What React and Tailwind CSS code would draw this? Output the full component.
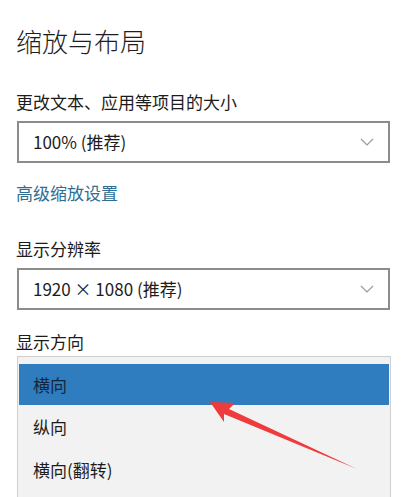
import React from "react";

const font = { fontFamily: '"Noto Sans CJK SC", "Noto Sans", sans-serif' };

function Chevron() {
  return (
    <svg width="14" height="8" viewBox="0 0 14 8" className="shrink-0">
      <path d="M1 1 L7 7 L13 1" fill="none" stroke="#9a9a9a" strokeWidth="1.2" />
    </svg>
  );
}

function Select({ value }) {
  return (
    <div className="ml-[17px] w-[373px] h-[42px] border-2 border-[#8c8c8c] bg-white flex items-center justify-between pl-[14px] pr-[14px]">
      <span className="text-[17px] text-[#1c1c1c]">{value}</span>
      <Chevron />
    </div>
  );
}

export default function App() {
  const options = ["横向", "纵向", "横向(翻转)"];
  return (
    <div className="relative w-[412px] h-[497px] overflow-hidden bg-white" style={font}>
      <h1 className="pl-4 pt-[24px] text-[26px] leading-[34px] font-light text-[#1e1e1e]">
        缩放与布局
      </h1>
      <div className="pl-4 mt-[32px] text-[17px] leading-[24px] text-[#1c1c1c]">
        更改文本、应用等项目的大小
      </div>
      <div className="mt-[7px]">
        <Select value="100% (推荐)" />
      </div>
      <div className="pl-4 mt-[18px] text-[17px] leading-[24px] text-[#2f6e92]">
        高级缩放设置
      </div>
      <div className="pl-4 mt-[32px] text-[17px] leading-[24px] text-[#1c1c1c]">
        显示分辨率
      </div>
      <div className="mt-[7px]">
        <Select value="1920 × 1080 (推荐)" />
      </div>
      <div className="pl-4 mt-[20px] text-[17px] leading-[24px] text-[#1c1c1c]">
        显示方向
      </div>
      <div className="ml-[17px] mt-[2px] w-[374px] border border-[#cfcfcf] bg-[#f2f2f2] pt-[7px] px-[1px] h-[160px]">
        {options.map((o, i) => (
          <div
            key={o}
            className={
              (i === 0 ? "bg-[#2f7dbf] text-[#14273a] h-[41px]" : "text-[#1c1c1c] h-[43px]") +
              " flex items-center pl-[14px] text-[17px]"
            }
          >
            {o}
          </div>
        ))}
      </div>
      <svg
        className="absolute left-0 top-0 pointer-events-none"
        width="412"
        height="497"
        viewBox="0 0 412 497"
      >
        <polygon
          points="210,402 235,403 229,409 357,469 224,414 224,422"
          fill="#ef3b3b"
        />
      </svg>
    </div>
  );
}
